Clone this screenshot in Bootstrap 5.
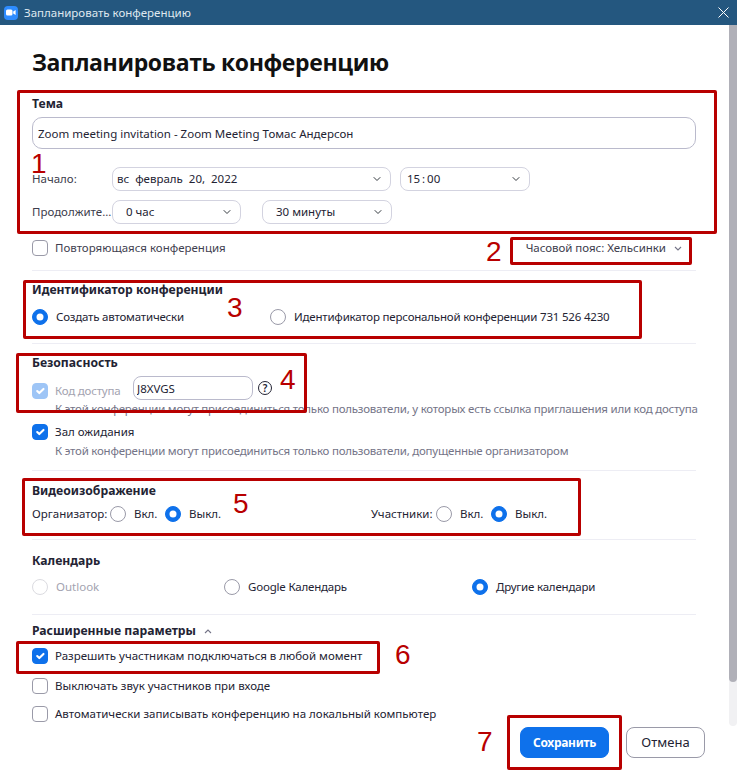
<!DOCTYPE html>
<html lang="ru">
<head>
  <meta charset="UTF-8">
  <meta name="viewport" content="width=device-width, initial-scale=1.0">
  <title>Запланировать конференцию</title>
  <link href="https://cdn.jsdelivr.net/npm/bootstrap@5.3.0/dist/css/bootstrap.min.css" rel="stylesheet">
  <style>
    html, body { height: 776px; overflow: hidden; }
    body {
      background: #fff;
      color: #232333;
      font-family: "Noto Sans", "Liberation Sans", sans-serif;
      font-size: 11.5px;
      line-height: 16px;
      position: relative;
    }
    .titlebar { height: 25px; background: #24577f; color: #dfe8ef; font-size: 11.5px; padding: 0 8px 0 4px; }
    .app-icon { width: 14px; height: 14px; background: #2d8cff; border-radius: 4px; margin-right: 6px; }
    .pane { height: 751px; }
    .scroll-track { width: 8px; height: 701px; background: #f1f1f3; border-radius: 0 0 4px 4px; flex-shrink: 0; }
    .scroll-thumb { height: 657px; background: #b0b0b8; border-radius: 0 0 4px 4px; }
    .form-pane { width: 729px; padding: 0 33px 0 32px; flex-shrink: 0; }

    .page-title { font-family: "Open Sans", "Liberation Sans", sans-serif; font-weight: 700; font-size: 23px; letter-spacing: -.38px; line-height: 24px; margin: 25px 0 0; color: #111; }
    .hdg { font-weight: 700; font-size: 12.2px; line-height: 16px; color: #232333; }
    .line { height: 1px; background: #ededf4; }
    .plain-line { color: #3f3f50; }
    .desc-line { color: #747487; padding-left: 23px; white-space: nowrap; letter-spacing: -.23px; }
    .off-text { color: #a3a3b0; }
    .dur-label { width: 80px; flex-shrink: 0; white-space: nowrap; color: #3c3c4c; }

    .zm-input.form-control {
      border: 1px solid #babacc; border-radius: 10px; color: #232333; font-size: 11.5px;
      line-height: 16px; padding: 0 5px; height: 32px; box-shadow: none;
    }
    .zm-code.form-control { width: 120px; height: 24px; border-radius: 8px; padding: 0 3px; margin-left: 13px; }
    .zm-select.form-select {
      border: 1px solid #d3d3e0; border-radius: 8px; color: #232333; font-size: 11.5px; line-height: 16px;
      height: 24px; padding: 0 20px 0 13px; background-position: right 8px center; background-size: 10px 8px;
    }
    .w-date { width: 279px; padding-left: 4px !important; }
    .w-time { width: 130px; margin-left: 9px; padding-left: 6px !important; }
    .w-dur { width: 129px; }
    .w-min { width: 130px; margin-left: 21px; }

    .form-check-input.zm-box { width: 16px; height: 16px; margin: 0; border: 1px solid #9a9aa8; border-radius: 4px; flex-shrink: 0; }
    .form-check-input.zm-dot { width: 16px; height: 16px; margin: 0; border: 1px solid #9a9aa8; flex-shrink: 0; }
    .form-check-input:checked { background-color: #0e71eb; border-color: #0e71eb; }
    .form-check-input[disabled] { opacity: .4; }
    .form-check-input.zm-dot[disabled] { opacity: .35; }
    .box-gap { gap: 7px; }
    .dot-gap { gap: 8px; }
    .help-mark { width: 14px; height: 14px; border: 1px solid #232333; border-radius: 50%; font-size: 10px; line-height: 12px; text-align: center; margin-left: 5px; font-weight: 600; }
    .code-check { margin-top: 5px; width: 88px; white-space: nowrap; }
    .tight-label { letter-spacing: -.2px; }

    .w-238 { width: 238px; }
    .w-192 { width: 192px; }
    .w-248 { width: 248px; }
    .w-78 { width: 78px; white-space: nowrap; }
    .w-65 { width: 65px; white-space: nowrap; }
    .w-55 { width: 55px; }
    .w-339 { width: 339px; }

    .mt-1px { margin-top: 1px; }
    .mt-3px { margin-top: 3px; }
    .mt-5px { margin-top: 5px; }
    .mt-7px { margin-top: 7px; }
    .mt-8px { margin-top: 8px; }
    .mt-9px { margin-top: 9px; }
    .mt-10px { margin-top: 10px; }
    .mt-11px { margin-top: 11px; }
    .mt-12px { margin-top: 12px; }
    .mt-13px { margin-top: 13px; }
    .mt-14px { margin-top: 14px; }
    .mt-16px { margin-top: 16px; }
    .mt-17px { margin-top: 17px; }
    .mt-18px { margin-top: 18px; }
    .mt-19px { margin-top: 19px; }
    .mt-22px { margin-top: 22px; }

    .tz-toggle { margin-right: 14px; gap: 8px; color: #3c3c4c; letter-spacing: -.03px; }
    .btn-row { gap: 17px; margin-right: -9px; }
    .btn-save.btn { width: 89px; height: 31px; padding: 0; background: #0e71eb; border-color: #0e71eb; border-radius: 8px; font-size: 12px; font-weight: 700; letter-spacing: -.3px; }
    .btn-cancel.btn { width: 79px; height: 31px; padding: 0; color: #232333; border: 1px solid #9a9aa8; border-radius: 8px; font-size: 13px; background: #fff; }

    /* red call-outs drawn on top of the dialog */
    .call-box { position: absolute; border: 3px solid #b80000; border-radius: 2px; }
    .call-num { position: absolute; color: #b80000; font-family: "Liberation Sans", sans-serif; font-size: 28px; line-height: 28px; }
    .cb1 { left: 17px; top: 90px; width: 700px; height: 144px; }
    .cb2 { left: 510px; top: 237px; width: 182px; height: 28px; }
    .cb3 { left: 23px; top: 280px; width: 619px; height: 59px; }
    .cb4 { left: 16px; top: 353px; width: 291px; height: 60px; }
    .cb5 { left: 22px; top: 478px; width: 559px; height: 58px; }
    .cb6 { left: 16px; top: 641px; width: 364px; height: 33px; }
    .cb7 { left: 507px; top: 715px; width: 115px; height: 55px; }
    .n1 { left: 31px; top: 150px; }
    .n2 { left: 486px; top: 238px; }
    .n3 { left: 227px; top: 294px; }
    .n4 { left: 280px; top: 366px; }
    .n5 { left: 233px; top: 490px; }
    .n6 { left: 395px; top: 641px; }
    .n7 { left: 477px; top: 728px; }
  </style>
</head>
<body>
  <div class="titlebar d-flex align-items-center">
    <div class="app-icon d-flex align-items-center justify-content-center">
      <svg width="10" height="7" viewBox="0 0 10 7"><rect x="0" y="0.5" width="6.5" height="6" rx="1.5" fill="#fff"/><path d="M7.2 2.6 9.6 1v5L7.2 4.4z" fill="#fff"/></svg>
    </div>
    <span>Запланировать конференцию</span>
    <svg class="ms-auto" width="11" height="11" viewBox="0 0 11 11"><path d="M.5.5l10 10M10.5.5l-10 10" stroke="#fff" stroke-width="1" fill="none"/></svg>
  </div>

  <div class="pane d-flex">
    <form class="form-pane">
      <h1 class="page-title">Запланировать конференцию</h1>

      <div class="hdg mt-22px">Тема</div>
      <input class="form-control zm-input mt-5px" type="text" value="Zoom meeting invitation - Zoom Meeting Томас Андерсон">

      <div class="d-flex align-items-center mt-18px">
        <span class="dur-label">Начало:</span>
        <select class="form-select zm-select w-date"><option>вс&nbsp;&nbsp;февраль&nbsp;&nbsp;20,&nbsp;&nbsp;2022</option></select>
        <select class="form-select zm-select w-time"><option>15&thinsp;:&thinsp;00</option></select>
      </div>
      <div class="d-flex align-items-center mt-9px">
        <span class="dur-label">Продолжите...</span>
        <select class="form-select zm-select w-dur"><option>0 час</option></select>
        <select class="form-select zm-select w-min"><option>30 минуты</option></select>
      </div>

      <div class="d-flex align-items-center justify-content-between mt-16px">
        <label class="d-flex align-items-center box-gap">
          <input class="form-check-input zm-box" type="checkbox">
          <span class="plain-line">Повторяющаяся конференция</span>
        </label>
        <div class="tz-toggle d-flex align-items-center">
          <span>Часовой пояс: Хельсинки</span>
          <svg width="8" height="5" viewBox="0 0 8 5"><path d="M1 1l3 3 3-3" stroke="#747487" stroke-width="1.1" fill="none"/></svg>
        </div>
      </div>
      <div class="line mt-14px"></div>

      <div class="hdg mt-11px">Идентификатор конференции</div>
      <div class="d-flex mt-11px">
        <label class="d-flex align-items-center dot-gap w-238">
          <input class="form-check-input zm-dot" type="radio" name="mid" checked>
          <span class="tight-label">Создать автоматически</span>
        </label>
        <label class="d-flex align-items-center dot-gap">
          <input class="form-check-input zm-dot" type="radio" name="mid">
          <span class="tight-label">Идентификатор персональной конференции 731 526 4230</span>
        </label>
      </div>
      <div class="line mt-18px"></div>

      <div class="hdg mt-11px">Безопасность</div>
      <div class="d-flex align-items-center mt-5px">
        <label class="d-flex align-items-center box-gap code-check">
          <input class="form-check-input zm-box" type="checkbox" checked disabled>
          <span class="off-text tight-label">Код доступа</span>
        </label>
        <input class="form-control zm-input zm-code" type="text" value="J8XVGS">
        <div class="help-mark">?</div>
      </div>
      <div class="desc-line mt-1px">К этой конференции могут присоединиться только пользователи, у которых есть ссылка приглашения или код доступа</div>
      <label class="d-flex align-items-center box-gap mt-7px">
        <input class="form-check-input zm-box" type="checkbox" checked>
        <span>Зал ожидания</span>
      </label>
      <div class="desc-line mt-3px">К этой конференции могут присоединиться только пользователи, допущенные организатором</div>
      <div class="line mt-11px"></div>

      <div class="hdg mt-12px">Видеоизображение</div>
      <div class="d-flex align-items-center mt-7px">
        <div class="d-flex align-items-center w-339">
          <span class="w-78">Организатор:</span>
          <label class="d-flex align-items-center dot-gap w-55"><input class="form-check-input zm-dot" type="radio" name="host"><span>Вкл.</span></label>
          <label class="d-flex align-items-center dot-gap"><input class="form-check-input zm-dot" type="radio" name="host" checked><span>Выкл.</span></label>
        </div>
        <div class="d-flex align-items-center">
          <span class="w-65">Участники:</span>
          <label class="d-flex align-items-center dot-gap w-55"><input class="form-check-input zm-dot" type="radio" name="part"><span>Вкл.</span></label>
          <label class="d-flex align-items-center dot-gap"><input class="form-check-input zm-dot" type="radio" name="part" checked><span>Выкл.</span></label>
        </div>
      </div>
      <div class="line mt-17px"></div>

      <div class="hdg mt-13px">Календарь</div>
      <div class="d-flex mt-10px">
        <label class="d-flex align-items-center dot-gap w-192"><input class="form-check-input zm-dot" type="radio" name="cal" disabled><span class="off-text">Outlook</span></label>
        <label class="d-flex align-items-center dot-gap w-248"><input class="form-check-input zm-dot" type="radio" name="cal"><span class="tight-label">Google Календарь</span></label>
        <label class="d-flex align-items-center dot-gap"><input class="form-check-input zm-dot" type="radio" name="cal" checked><span class="tight-label">Другие календари</span></label>
      </div>
      <div class="line mt-19px"></div>

      <div class="hdg mt-8px d-flex align-items-center gap-2">
        <span>Расширенные параметры</span>
        <svg width="8" height="5" viewBox="0 0 8 5"><path d="M1 4l3-3 3 3" stroke="#747487" stroke-width="1.1" fill="none"/></svg>
      </div>
      <label class="d-flex align-items-center box-gap mt-9px">
        <input class="form-check-input zm-box" type="checkbox" checked>
        <span>Разрешить участникам подключаться в любой момент</span>
      </label>
      <label class="d-flex align-items-center box-gap mt-14px">
        <input class="form-check-input zm-box" type="checkbox">
        <span>Выключать звук участников при входе</span>
      </label>
      <label class="d-flex align-items-center box-gap mt-12px">
        <input class="form-check-input zm-box" type="checkbox">
        <span>Автоматически записывать конференцию на локальный компьютер</span>
      </label>

      <div class="d-flex justify-content-end btn-row mt-5px">
        <button type="button" class="btn btn-primary btn-save">Сохранить</button>
        <button type="button" class="btn btn-cancel">Отмена</button>
      </div>
    </form>
    <div class="scroll-track"><div class="scroll-thumb"></div></div>
  </div>

  <div class="call-box cb1"></div><div class="call-num n1">1</div>
  <div class="call-box cb2"></div><div class="call-num n2">2</div>
  <div class="call-box cb3"></div><div class="call-num n3">3</div>
  <div class="call-box cb4"></div><div class="call-num n4">4</div>
  <div class="call-box cb5"></div><div class="call-num n5">5</div>
  <div class="call-box cb6"></div><div class="call-num n6">6</div>
  <div class="call-box cb7"></div><div class="call-num n7">7</div>

  <script src="https://cdn.jsdelivr.net/npm/bootstrap@5.3.0/dist/js/bootstrap.bundle.min.js"></script>
</body>
</html>
